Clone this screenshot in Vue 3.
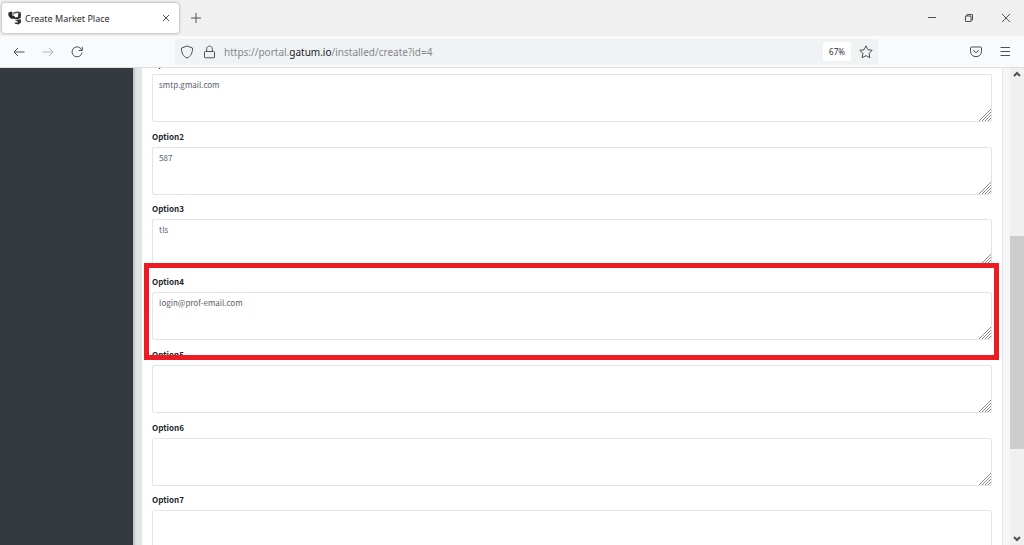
<script setup>
import { ref } from 'vue'

const options = ref([
  { name: 'Option1', value: 'smtp.gmail.com' },
  { name: 'Option2', value: '587' },
  { name: 'Option3', value: 'tls' },
  { name: 'Option4', value: 'login@prof-email.com', marked: true },
  { name: 'Option5', value: '' },
  { name: 'Option6', value: '' },
  { name: 'Option7', value: '' },
])
</script>

<template>
  <div class="browser">
    <header class="tabs">
      <div class="tab">
        <svg class="favicon" viewBox="0 0 14 14" aria-hidden="true">
          <path d="M0.300 1.500 L4 .5 L4.500 4.500 L7 5.500 L7 7.800 L3 7.800 L0.500 5 Z" fill="#2a2a2a" />
          <path d="M5.500 1.500 Q9 -.5 13 1.200 V3 L10.500 3 L9.500 2 L6 2.800 Z" fill="#555" />
          <path d="M10.200 3 H13 L12.700 7 L9.500 8.200 L6.500 8 L6.500 6.500 L10 6 Z" fill="#2a2a2a" />
          <path d="M6.500 9 L13 8.300 L13 11.500 L10.500 13.500 L7 12.800 L6.500 11.500 L9.500 11.500 L9.500 10.300 Z" fill="#333" />
          <path d="M4.300 1 H6 V4.500 H4.700 Z" fill="#999" />
        </svg>
        <span class="tab-title">Create Market Place</span>
        <button class="icon-button tab-close" aria-label="Close tab">
          <svg class="icon-small" viewBox="0 0 8 8"><path d="M1 1 L7 7 M7 1 L1 7" /></svg>
        </button>
      </div>
      <button class="icon-button new-tab" aria-label="New tab">
        <svg class="icon" viewBox="0 0 14 14"><path d="M7 2 V12 M2 7 H12" /></svg>
      </button>
      <div class="window-controls">
        <button class="icon-button" aria-label="Minimize">
          <svg class="icon" viewBox="0 0 14 14"><path d="M3 6.500 H11" /></svg>
        </button>
        <button class="icon-button" aria-label="Restore">
          <svg class="icon" viewBox="0 0 14 14"><path d="M3.500 5 H9 V10.500 H3.500 Z M5 5 V3.500 H10.500 V9 H9" /></svg>
        </button>
        <button class="icon-button" aria-label="Close window">
          <svg class="icon" viewBox="0 0 14 14"><path d="M3 3 L11 11 M11 3 L3 11" /></svg>
        </button>
      </div>
    </header>

    <nav class="toolbar">
      <div class="nav-buttons">
        <button class="icon-button" aria-label="Back">
          <svg class="icon" viewBox="0 0 14 14"><path d="M12.500 7 H2 M6 3 L2 7 L6 11" /></svg>
        </button>
        <button class="icon-button faded" aria-label="Forward">
          <svg class="icon" viewBox="0 0 14 14"><path d="M1.500 7 H12 M8 3 L12 7 L8 11" /></svg>
        </button>
        <button class="icon-button" aria-label="Reload">
          <svg class="icon" viewBox="0 0 14 14"><path d="M11.800 5.300 A5 5 0 1 0 12 7.500 M12.300 1.800 V5.500 H8.600" /></svg>
        </button>
      </div>
      <div class="address">
        <svg class="icon" viewBox="0 0 14 14"><path d="M7 1 L12.500 3 C12.700 8 10.700 11.500 7 13 C3.300 11.500 1.300 8 1.500 3 Z" /></svg>
        <svg class="icon" viewBox="0 0 14 14"><path d="M3.300 6.500 H11.700 Q12.500 6.500 12.500 7.300 V12 Q12.500 12.800 11.700 12.800 H3.300 Q2.500 12.800 2.500 12 V7.300 Q2.500 6.500 3.300 6.500 Z M4.700 6.500 V3.800 C4.700 .2 10.300 .2 10.300 3.800 V6.500" /></svg>
        <div class="url" role="textbox" aria-label="Address" contenteditable="true" spellcheck="false">https://portal.<span class="host">gatum.io</span>/installed/create?id=4</div>
        <button class="zoom">67%</button>
        <button class="icon-button star" aria-label="Bookmark">
          <svg class="icon" viewBox="0 0 14 14"><path d="M7 .8 L8.900 4.700 L13.200 5.300 L10.100 8.300 L10.900 12.800 L7 10.600 L3.100 12.800 L3.900 8.300 L.8 5.300 L5.100 4.700 Z" /></svg>
        </button>
      </div>
      <div class="tools">
        <button class="icon-button" aria-label="Save to Pocket">
          <svg class="icon" viewBox="0 0 14 14"><path d="M2.500 2 H11.500 Q12.500 2 12.500 3 V6.200 C12.500 13.500 1.500 13.500 1.500 6.200 V3 Q1.500 2 2.500 2 Z M4.300 5.300 L7 7.800 L9.700 5.300" /></svg>
        </button>
        <button class="icon-button" aria-label="Menu">
          <svg class="icon" viewBox="0 0 14 14"><path d="M2.500 2.500 H12 M2.500 6.500 H12 M2.500 10.500 H12" /></svg>
        </button>
      </div>
    </nav>

    <div class="page">
      <aside class="sidebar"></aside>
      <main class="content">
        <form class="card">
          <div v-for="option in options" :key="option.name" class="field" :class="{ marked: option.marked }">
            <label :for="option.name">{{ option.name }}</label>
            <div class="box">
              <textarea :id="option.name" v-model="option.value" spellcheck="false"></textarea>
              <svg class="grip" viewBox="0 0 12 12" aria-hidden="true">
                <path d="M0 12 L12 0 M3 12 L12 3 M6 12 L12 6 M9 12 L12 9" />
              </svg>
            </div>
          </div>
        </form>
      </main>
      <div class="scrollbar">
        <svg class="arrow" viewBox="0 0 8 8"><path d="M1 6 L4 3 L7 6" /></svg>
        <div class="track"><div class="thumb"></div></div>
        <svg class="arrow" viewBox="0 0 8 8"><path d="M1 2 L4 5 L7 2" /></svg>
      </div>
    </div>
  </div>
</template>

<style>
body {
  margin: 0;
}
</style>

<style scoped>
.browser {
  display: flex;
  flex-direction: column;
  height: 100vh;
  overflow: hidden;
  background: #fff;
  font-family: "Noto Sans", sans-serif;
}

button {
  border: 0;
  padding: 0;
  background: none;
  font-family: inherit;
  color: inherit;
}

svg {
  display: block;
  flex: none;
  fill: none;
  stroke: #505054;
}

.icon {
  width: 14px;
  height: 14px;
}

.icon-small {
  width: 8px;
  height: 8px;
}

.icon-button {
  display: flex;
  align-items: center;
  justify-content: center;
}

.tabs {
  display: flex;
  align-items: center;
  height: 36px;
  padding-left: 2px;
  background: #f0f0f0;
}

.tab {
  box-sizing: border-box;
  display: flex;
  align-items: center;
  width: 177px;
  height: 30px;
  padding: 0 9px 0 6px;
  border-radius: 3px;
  background: #fff;
  box-shadow: 0 0 3px rgba(0, 0, 0, 0.4);
}

.favicon {
  width: 14px;
  height: 14px;
  stroke: none;
}

.tab-title {
  flex: 1;
  padding-left: 3px;
  font-size: 9px;
  color: #2a2a2e;
  white-space: nowrap;
}

.new-tab {
  margin-left: 10px;
}

.window-controls {
  display: flex;
  gap: 23px;
  margin-left: auto;
  padding-right: 11px;
}

.toolbar {
  box-sizing: border-box;
  display: flex;
  align-items: center;
  height: 32px;
  background: #f9fafc;
  border-bottom: 1px solid #dcdee0;
}

.nav-buttons {
  display: flex;
  gap: 15px;
  padding: 0 12px;
  width: 151px;
}

.faded {
  opacity: 0.4;
}

.address {
  box-sizing: border-box;
  display: flex;
  flex: 1;
  align-items: center;
  height: 26px;
  padding: 0 5px;
  gap: 8px;
  border-radius: 2px;
  background: #f0f3f4;
}

.url {
  flex: 1;
  font-size: 10px;
  color: #85878b;
  white-space: nowrap;
  outline: none;
}

.host {
  color: #18181c;
}

.zoom {
  width: 28px;
  height: 19px;
  border-radius: 2px;
  background: #fff;
  color: #333;
  font-size: 8px;
}

.tools {
  display: flex;
  gap: 15px;
  padding: 0 12px 0 91px;
}

.page {
  display: flex;
  flex: 1;
  min-height: 0;
}

.sidebar {
  width: 13%;
  background: #343a40;
}

.content {
  display: flex;
  flex: 1;
  overflow: hidden;
  padding: 0 7px 0 8px;
  background: linear-gradient(to right, #b5babd 0, #dfe3e5 3px, #e3e6e9 8px, #f4f6f8 9px);
}

.card {
  display: flex;
  flex: 1;
  flex-direction: column;
  margin: -11px 0 -21px;
  padding: 0 10px;
  border: 1px solid #e3e6e8;
  border-width: 0 1px;
  background: #fff;
  font-family: "Noto Sans CJK SC", sans-serif;
}

.field {
  position: relative;
  flex: 1 0 0;
}

label {
  display: block;
  margin-bottom: 3px;
  font-size: 8px;
  line-height: 14px;
  font-weight: 700;
  color: #212529;
}

.box {
  position: relative;
}

textarea {
  box-sizing: border-box;
  display: block;
  width: 100%;
  height: 48px;
  margin: 0;
  padding: 4px 6px;
  border: 1px solid #e2e4e6;
  border-radius: 2px;
  outline: none;
  resize: none;
  background: #fff;
  color: #5a6067;
  font-family: inherit;
  font-size: 8px;
  line-height: 12px;
}

.grip {
  position: absolute;
  right: 1px;
  bottom: 1px;
  width: 12px;
  height: 12px;
  stroke: #888;
}

.marked::after {
  content: "";
  position: absolute;
  z-index: 1;
  top: -12px;
  left: -8px;
  right: -7px;
  height: 87px;
  border: 5px solid #ed1c24;
  pointer-events: none;
}

.scrollbar {
  display: flex;
  flex-direction: column;
  align-items: center;
  width: 14px;
  padding: 2px 0;
  background: #f0f0f0;
}

.arrow {
  width: 8px;
  height: 8px;
  stroke-width: 2;
}

.track {
  flex: 1;
  width: 100%;
}

.thumb {
  height: 213px;
  margin-top: 158px;
  background: #cdcdcd;
}
</style>
